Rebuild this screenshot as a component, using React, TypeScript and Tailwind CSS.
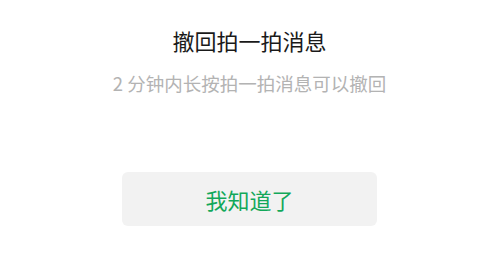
export default function App() {
  return (
    <div
      className="w-[499px] h-[260px] bg-white flex flex-col items-center"
      style={{ fontFamily: '"Noto Sans CJK SC", "Noto Sans", sans-serif' }}
    >
      <h1 className="mt-[25px] text-[22px] leading-[30px] text-[#1a1a1a] font-normal">
        撤回拍一拍消息
      </h1>
      <p className="mt-[15px] text-[18.5px] leading-[26px] text-[#b3b3b3]">
        2 分钟内长按拍一拍消息可以撤回
      </p>
      <button className="mt-[76px] w-[255px] h-[54px] rounded-[6px] bg-[#f2f2f2] text-[22px] text-[#12a85a]">
        我知道了
      </button>
    </div>
  );
}
